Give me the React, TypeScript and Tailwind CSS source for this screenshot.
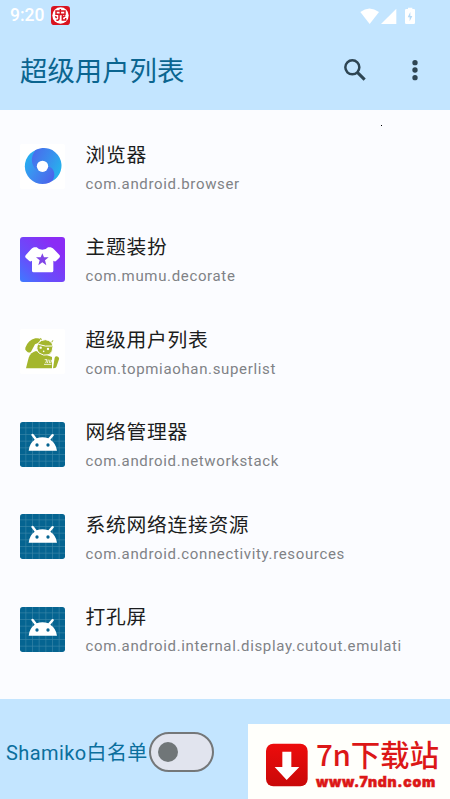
import type { ReactNode } from "react";

function BrowserIcon() {
  return (
    <svg className="w-[45px] h-[45px]" viewBox="0 0 135 135">
      <defs>
        <linearGradient id="swirlLower" x1="0" y1="0.2" x2="0.9" y2="0.7">
          <stop offset="0" stopColor="#22b5f0" />
          <stop offset="0.45" stopColor="#3d8df0" />
          <stop offset="1" stopColor="#4c62ea" />
        </linearGradient>
        <linearGradient id="swirlUpper" x1="0" y1="0.2" x2="1" y2="0.7">
          <stop offset="0" stopColor="#496cec" />
          <stop offset="0.5" stopColor="#3a8cee" />
          <stop offset="1" stopColor="#25b5ec" />
        </linearGradient>
      </defs>
      <rect width="135" height="135" rx="6" fill="#fff" />
      <circle cx="67.500" cy="67" r="53" fill="url(#swirlLower)" />
      <path
        d="M47 18A53 53 0 0 1 96 112C108 94 104 72 84 67L67 67L51 78C35 66 28 42 47 18Z"
        fill="url(#swirlUpper)"
      />
      <circle cx="67.500" cy="67" r="17" fill="#fff" />
    </svg>
  );
}

function ThemeIcon() {
  return (
    <svg className="w-[45px] h-[45px]" viewBox="0 0 135 135">
      <defs>
        <linearGradient id="theme" x1="0" y1="1" x2="0.8" y2="0.2">
          <stop offset="0" stopColor="#3d7bff" />
          <stop offset="0.4" stopColor="#6550fb" />
          <stop offset="1" stopColor="#8b2cf5" />
        </linearGradient>
      </defs>
      <rect width="135" height="135" rx="9" fill="url(#theme)" />
      <path
        d="M42 31H50Q55 38 67 38Q79 38 84 31H92Q99 33 104 39L119 55Q121 59 118 62L108 72Q105 75 100 71V101Q100 106 95 106H41Q36 106 36 101V71Q31 75 28 72L17 62Q14 59 17 55L31 39Q36 33 42 31Z"
        fill="#fff"
      />
      <path d="M67 49L72 61H86L75 70L79 85L67 76L55 85L59 70L48 61H62Z" fill="#8045e6" />
    </svg>
  );
}

function SuperListIcon() {
  return (
    <svg className="w-[45px] h-[45px]" viewBox="0 0 135 135">
      <rect width="135" height="135" rx="6" fill="#fff" />
      <path d="M18 118L26 86Q32 70 48 66L96 84V118Z" fill="#a4b62d" />
      <path d="M16 56Q24 34 46 28Q56 26 62 31L56 41L45 46L33 68Q26 74 20 67Q14 62 16 56Z" fill="#a4b62d" />
      <path d="M62 28L65 35M98 35L94 42" stroke="#a4b62d" strokeWidth="3" strokeLinecap="round" />
      <path
        d="M54 43Q62 32 76 32Q96 34 99 52Q99 70 87 77Q70 82 57 72Q46 60 54 43Z"
        fill="#a4b62d"
        stroke="#fff"
        strokeWidth="3"
      />
      <path d="M55 46Q76 54 98 51" fill="none" stroke="#fff" strokeWidth="3" />
      <circle cx="62" cy="56" r="3.500" fill="#fff" />
      <circle cx="84" cy="60" r="3.500" fill="#fff" />
      <circle cx="71" cy="67" r="2.500" fill="#fff" />
      <path d="M104 86Q107 80 114 83Q119 86 117 91L109 114Q107 118 99 118Z" fill="#a4b62d" />
      <path d="M74 92H81L77 102M85 92L82 102M90 92L88 102M96 92L92 102M72 106H94" fill="none" stroke="#fff" strokeWidth="2.500" />
    </svg>
  );
}

function AndroidIcon() {
  return (
    <svg className="w-[45px] h-[45px]" viewBox="0 0 135 135">
      <rect width="135" height="135" rx="8" fill="#056491" />
      <path
        d="M17.500 0V135M37.500 0V135M57.500 0V135M77.500 0V135M97.500 0V135M117.500 0V135M0 17.500H135M0 37.500H135M0 57.500H135M0 77.500H135M0 97.500H135M0 117.500H135"
        stroke="#3a86a8"
        strokeWidth="2"
      />
      <path d="M26 86Q28 64 44 53L34 40Q33 36 37 35Q40 35 42 38L50 49Q67 42 85 49L94 38Q97 34 100 37Q103 38 101 41L91 53Q108 64 111 86Z" fill="#fff" />
      <circle cx="51" cy="69" r="5" fill="#056491" />
      <circle cx="84" cy="69" r="5" fill="#056491" />
    </svg>
  );
}

type AppItem = { name: string; pkg: string; icon: ReactNode };

const apps: AppItem[] = [
  { name: "浏览器", pkg: "com.android.browser", icon: <BrowserIcon /> },
  { name: "主题装扮", pkg: "com.mumu.decorate", icon: <ThemeIcon /> },
  { name: "超级用户列表", pkg: "com.topmiaohan.superlist", icon: <SuperListIcon /> },
  { name: "网络管理器", pkg: "com.android.networkstack", icon: <AndroidIcon /> },
  { name: "系统网络连接资源", pkg: "com.android.connectivity.resources", icon: <AndroidIcon /> },
  { name: "打孔屏", pkg: "com.android.internal.display.cutout.emulati", icon: <AndroidIcon /> },
];

function StatusBar() {
  return (
    <div className="flex items-center h-[31px] pl-[10px] text-white">
      <span className="text-[17.5px] font-medium leading-none w-[41px]">9:20</span>
      <svg className="w-[19px] h-[19px]" viewBox="0 0 57 57">
        <rect width="57" height="57" rx="10" fill="#d9131f" />
        <circle cx="28.500" cy="28.500" r="24.500" fill="#fff" />
        <path
          d="M28 9V28M15 15H42V25H15ZM24 27V38Q24 43 16 43M34 27V42H44V36M13 31L17 36M43 29L36 33"
          fill="none"
          stroke="#d9131f"
          strokeWidth="4.500"
        />
      </svg>
      <svg className="ml-auto mr-[33px] w-[57px] h-[18px]" viewBox="0 0 171 54">
        <path d="M1 15Q28 -6 57 15L29 51Z" fill="#fff" />
        <path d="M63 51L109 5V51Z" fill="#fff" />
        <path d="M139 6H144V2H157V6H162Q165 6 165 10V48Q165 51 161 51H139Q135 51 135 48V10Q135 6 139 6Z" fill="#fff" />
        <path d="M151 15L143 31H149V43L157 27H151Z" fill="#b5d9f6" />
      </svg>
    </div>
  );
}

function Header() {
  return (
    <header className="h-[110px] bg-[#c3e5ff]">
      <StatusBar />
      <div className="flex items-center h-[79px] pl-5">
        <h1 className="pt-1 text-[27.4px] leading-none text-[#0b6590]">超级用户列表</h1>
        <svg className="ml-auto mb-[2px] w-[22px] h-[22px]" viewBox="0 0 66 66" fill="none" stroke="#2e4553">
          <circle cx="25" cy="25" r="21" strokeWidth="7.500" />
          <path d="M40 40L62 62" strokeWidth="9" />
        </svg>
        <svg className="ml-[46px] mr-[32px] mb-[2px] w-[6px] h-[22px]" viewBox="0 0 18 66" fill="#2e4553">
          <circle cx="9" cy="11" r="8" />
          <circle cx="9" cy="33" r="8" />
          <circle cx="9" cy="56" r="8" />
        </svg>
      </div>
    </header>
  );
}

function AppRow({ name, pkg, icon }: AppItem) {
  return (
    <li className="flex items-center h-[92.5px] pl-5">
      {icon}
      <div className="ml-[20.5px] pt-[5px] whitespace-nowrap">
        <p className="text-[19.8px] leading-[29px] tracking-[0.7px] text-[#1b1d20]">{name}</p>
        <p className="text-[15px] leading-[28px] tracking-[0.65px] text-[#808286]">{pkg}</p>
      </div>
    </li>
  );
}

function Watermark() {
  return (
    <div className="flex w-[202px] h-[75px] mt-auto bg-[#fffffb]">
      <svg className="ml-[17px] mt-[19px] w-[43px] h-[44px]" viewBox="0 0 129 132">
        <defs>
          <linearGradient id="download" x1="0" y1="0" x2="0" y2="1">
            <stop offset="0" stopColor="#ed0c0c" />
            <stop offset="1" stopColor="#c90808" />
          </linearGradient>
        </defs>
        <rect x="3" y="2" width="125" height="128" rx="22" fill="url(#download)" />
        <path d="M52 26H79V72H103L65 111L29 72H52Z" fill="#fff" />
      </svg>
      <div className="ml-[8px] mt-[12px] text-[#dc1717] whitespace-nowrap">
        <p className="h-[37px] text-[29.5px] leading-[34px] tracking-[-0.2px] font-medium font-['Noto_Sans_CJK_SC',sans-serif]">7n下载站</p>
        <p className="text-[14px] leading-[18px] tracking-[0.75px] font-black font-[Inter] [-webkit-text-stroke:0.5px_#dc1717]">www.7ndn.com</p>
      </div>
    </div>
  );
}

export default function App() {
  return (
    <div className="relative flex flex-col w-[450px] h-[799px] overflow-hidden bg-[#fbfcff] font-[Roboto,'Noto_Sans_CJK_SC',sans-serif]">
      <Header />
      <span className="absolute left-[381px] top-[125px] w-px h-px bg-black" />
      <ul className="pt-[10.5px] h-[589px]">
        {apps.map((app) => (
          <AppRow key={app.pkg} {...app} />
        ))}
      </ul>
      <footer className="flex h-[100px] bg-[#c3e5ff]">
        <div className="flex items-center h-[105px] pl-[6px] w-[248px]">
          <span className="w-[143px] pt-[2px] text-[20px] tracking-[0.4px] whitespace-nowrap text-[#0b6f9d]">Shamiko白名单</span>
          <div className="flex items-center w-[65px] h-[40px] pl-[7px] rounded-full border-2 border-[#747779] bg-[#e1e4ee]">
            <div className="w-[20px] h-[20px] rounded-full bg-[#707678]" />
          </div>
        </div>
        <Watermark />
      </footer>
    </div>
  );
}
